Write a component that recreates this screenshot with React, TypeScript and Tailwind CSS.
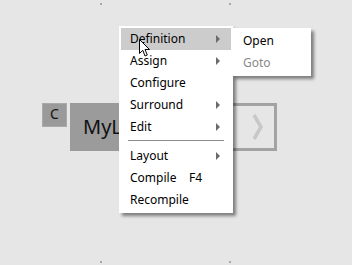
import React from 'react';

const items: { label: string; sub?: boolean; key?: string; sep?: boolean; active?: boolean }[] = [
  { label: 'Definition', sub: true, active: true },
  { label: 'Assign', sub: true },
  { label: 'Configure' },
  { label: 'Surround', sub: true },
  { label: 'Edit', sub: true, sep: true },
  { label: 'Layout', sub: true },
  { label: 'Compile', key: 'F4' },
  { label: 'Recompile' },
];

function Arrow() {
  return (
    <svg width="5" height="8" viewBox="0 0 5 8" className="ml-auto mr-[10px]">
      <path d="M0 0 L4 4 L0 8 Z" fill="#6b6b6b" />
    </svg>
  );
}

function Cursor() {
  return (
    <svg width="12" height="19" viewBox="0 0 12 19" className="absolute left-[139px] top-[39px]">
      <path
        d="M0.5 0.5 L0.5 14.5 L3.8 11.3 L6 17 L8.3 16 L6 10.5 L10.5 10.5 Z"
        fill="#ffffff"
        stroke="#000000"
        strokeWidth="1"
      />
    </svg>
  );
}

function Dots() {
  return (
    <div className="flex w-[131px] justify-between">
      <div className="h-[2px] w-[2px] bg-[#a8a8a8]" />
      <div className="h-[2px] w-[2px] bg-[#a8a8a8]" />
    </div>
  );
}

export default function App() {
  return (
    <div className="relative h-[265px] w-[352px] overflow-hidden bg-[#e6e6e6] font-['Noto_Sans','Open_Sans',sans-serif]">
      {/* grid dots */}
      <div className="absolute left-[100px] top-[3px] flex h-[260px] flex-col justify-between">
        <Dots />
        <Dots />
      </div>

      {/* canvas nodes */}
      <div className="absolute left-[42px] top-[103px] flex items-start gap-[3px]">
        <div className="flex h-[24px] w-[25px] justify-center border border-[#a9a9a9] bg-[#9a9a9a] pt-[1px] text-[14px] leading-[18px] text-[#111]">
          C
        </div>
        <div className="flex h-[48px] w-[156px] items-center bg-[#9b9b9b] pl-[13px] text-[20px] text-[#111]">
          <span className="w-[36px] overflow-hidden whitespace-nowrap">MyLibrary</span>
        </div>
      </div>
      <div className="absolute left-[226px] top-[103px] flex h-[48px] w-[51px] items-center justify-center border-[3px] border-[#a3a3a3]">
        <svg width="12" height="26" viewBox="0 0 12 26" className="ml-[12px]">
          <path d="M2 1 L9 13 L2 25" fill="none" stroke="#c8c8c8" strokeWidth="3.5" />
        </svg>
      </div>

      {/* context menu */}
      <div className="absolute left-[119px] top-[26px] w-[114px] bg-white py-[2px] text-[12px] text-black shadow-[3px_3px_3px_rgba(0,0,0,0.45)]">
        {items.map((it) => (
          <div key={it.label}>
            <div className={`mx-[2px] flex h-[22px] items-center pl-[9px] ${it.active ? 'bg-[#cccccc]' : ''}`}>
              <span className={it.key ? 'w-[59px]' : ''}>{it.label}</span>
              {it.key && <span>{it.key}</span>}
              {it.sub && <Arrow />}
            </div>
            {it.sep && <div className="mx-[9px] mb-[4px] mt-[2px] h-px bg-[#8c8c8c]" />}
          </div>
        ))}
      </div>

      {/* submenu */}
      <div className="absolute left-[232px] top-[28px] flex w-[79px] flex-col bg-white py-[2px] text-[12px] shadow-[3px_3px_3px_rgba(0,0,0,0.45)]">
        <div className="flex h-[22px] items-center pl-[11px] text-black">Open</div>
        <div className="flex h-[22px] items-center pl-[11px] text-[#8a8a8a]">Goto</div>
      </div>

      <Cursor />
    </div>
  );
}
